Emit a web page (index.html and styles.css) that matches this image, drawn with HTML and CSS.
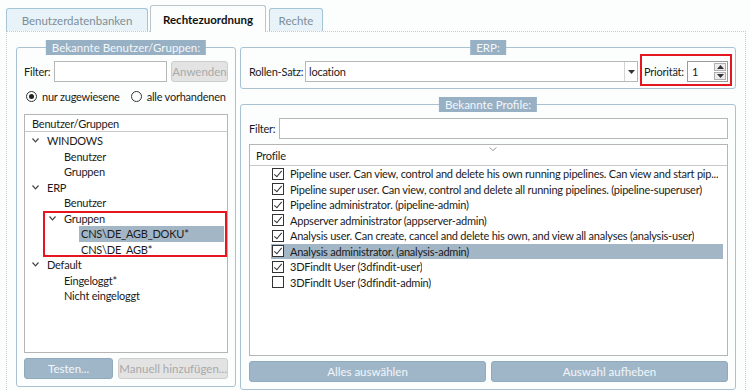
FILE: index.html
```html
<!DOCTYPE html>
<html lang="de">
  <head>
    <meta charset="UTF-8" />
    <title>Rechtezuordnung</title>
    <link rel="stylesheet" href="styles.css">
  </head>
  <body>
    <div class="window">
      <div class="tabs">
        <div class="tab tab-db">Benutzerdatenbanken</div>
        <div class="tab active">Rechtezuordnung</div>
        <div class="tab tab-rights">Rechte</div>
      </div>

      <div class="page">
        <!-- left: users / groups -->
        <div class="group users">
          <div class="group-title">Bekannte Benutzer/Gruppen:</div>
          <div class="field-row">
            <span class="field-label">Filter:</span>
            <div class="text-input"></div>
            <div class="btn off apply">Anwenden</div>
          </div>
          <div class="radios">
            <span class="radio checked"></span>
            <span>nur zugewiesene</span>
            <span class="radio second"></span>
            <span>alle vorhandenen</span>
          </div>
          <div class="tree">
            <div class="tree-head">Benutzer/Gruppen</div>
            <div class="tree-body">
              <div class="node lvl1"><span class="twist"><svg width="7" height="5"><polyline points="0.5,0.5 3.5,3.8 6.5,0.5" /></svg></span><span class="node-text">WINDOWS</span></div>
              <div class="node lvl2"><span class="twist"></span><span class="node-text">Benutzer</span></div>
              <div class="node lvl2"><span class="twist"></span><span class="node-text">Gruppen</span></div>
              <div class="node lvl1"><span class="twist"><svg width="7" height="5"><polyline points="0.5,0.5 3.5,3.8 6.5,0.5" /></svg></span><span class="node-text">ERP</span></div>
              <div class="node lvl2"><span class="twist"></span><span class="node-text">Benutzer</span></div>
              <div class="mark">
                <div class="node lvl2"><span class="twist"><svg width="7" height="5"><polyline points="0.5,0.5 3.5,3.8 6.5,0.5" /></svg></span><span class="node-text">Gruppen</span></div>
                <div class="node lvl3 sel"><span class="twist"></span><span class="node-text">CNS\DE_AGB_DOKU*</span></div>
                <div class="node lvl3"><span class="twist"></span><span class="node-text">CNS\DE_AGB*</span></div>
              </div>
              <div class="node lvl1"><span class="twist"><svg width="7" height="5"><polyline points="0.5,0.5 3.5,3.8 6.5,0.5" /></svg></span><span class="node-text">Default</span></div>
              <div class="node lvl2"><span class="twist"></span><span class="node-text">Eingeloggt*</span></div>
              <div class="node lvl2"><span class="twist"></span><span class="node-text">Nicht eingeloggt</span></div>
            </div>
          </div>
          <div class="btn-row">
            <div class="btn test-btn">Testen...</div>
            <div class="btn off add-btn">Manuell hinzufügen...</div>
          </div>
        </div>

        <!-- right: role set and profiles -->
        <div class="side">
          <div class="group erp">
            <div class="group-title">ERP:</div>
            <div class="field-row">
              <span class="field-label wide">Rollen-Satz:</span>
              <div class="combo">
                <span class="combo-value">location</span>
                <span class="combo-drop"><svg width="7" height="4"><polygon points="0,0 7,0 3.5,4" /></svg></span>
              </div>
              <div class="prio">
                <span>Priorität:</span>
                <div class="spin">
                  <span class="spin-value">1</span>
                  <span class="spin-btns">
                    <span class="spin-btn"><svg width="7" height="4"><polygon points="3.5,0 7,4 0,4" /></svg></span>
                    <span class="spin-btn"><svg width="7" height="4"><polygon points="0,0 7,0 3.5,4" /></svg></span>
                  </span>
                </div>
              </div>
            </div>
          </div>

          <div class="group profiles">
            <div class="group-title">Bekannte Profile:</div>
            <div class="field-row">
              <span class="field-label">Filter:</span>
              <div class="text-input"></div>
            </div>
            <div class="list">
              <div class="list-head">Profile<svg class="sort" width="8" height="4"><polyline points="0.5,0.5 4,3.5 7.5,0.5" /></svg></div>
              <div class="item"><span class="check on"></span><span class="item-text">Pipeline user. Can view, control and delete his own running pipelines. Can view and start pip...</span></div>
              <div class="item"><span class="check on"></span><span class="item-text">Pipeline super user. Can view, control and delete all running pipelines. (pipeline-superuser)</span></div>
              <div class="item"><span class="check on"></span><span class="item-text">Pipeline administrator. (pipeline-admin)</span></div>
              <div class="item"><span class="check on"></span><span class="item-text">Appserver administrator (appserver-admin)</span></div>
              <div class="item"><span class="check on"></span><span class="item-text">Analysis user. Can create, cancel and delete his own, and view all analyses (analysis-user)</span></div>
              <div class="item sel"><span class="check on"></span><span class="item-text">Analysis administrator. (analysis-admin)</span></div>
              <div class="item"><span class="check on"></span><span class="item-text">3DFindIt User (3dfindit-user)</span></div>
              <div class="item"><span class="check"></span><span class="item-text">3DFindIt User (3dfindit-admin)</span></div>
            </div>
            <div class="btn-row">
              <div class="btn half">Alles auswählen</div>
              <div class="btn half">Auswahl aufheben</div>
            </div>
          </div>
        </div>
      </div>
    </div>
  </body>
</html>
```

FILE: styles.css
```css
* {
  box-sizing: border-box;
}
body {
  margin: 0;
  background-color: #fcfefe;
  font-family: Lato, 'Noto Sans', sans-serif;
  font-size: 11px;
  letter-spacing: -0.22px;
  color: #1b1b1b;
  white-space: nowrap;
  overflow: hidden;
}
.window {
  padding: 5px 0 0 6px;
  height: 390px;
}

/* tabs */
.tabs {
  display: flex;
  align-items: flex-end;
  height: 26px;
}
.tab {
  height: 23px;
  display: flex;
  align-items: center;
  justify-content: center;
  border: 1px solid #a5c4d4;
  border-bottom: none;
  border-radius: 3px 3px 0 0;
  background-color: #e7f3f8;
  color: #7d8e99;
  font-size: 11.5px;
  letter-spacing: 0;
  margin-right: 2px;
}
.tab-db {
  width: 142px;
}
.tab-rights {
  width: 54px;
}
.tab.active {
  width: 116px;
  height: 27px;
  margin-bottom: -1px;
  margin-right: 3px;
  background-color: #fcfefe;
  border-color: #b9c4cb;
  color: #111;
  font-weight: bold;
  position: relative;
  z-index: 1;
}

.page {
  width: 740px;
  height: 359px;
  border: 1px dotted #c3cdd2;
  border-bottom: none;
  display: flex;
  gap: 4px;
  padding: 15px 9px 0;
}

/* group boxes */
.group {
  border: 1px solid #a9c1d1;
  border-radius: 3px;
  position: relative;
}
.group-title {
  position: absolute;
  top: -8px;
  left: 50%;
  transform: translateX(-50%);
  height: 15px;
  line-height: 15px;
  padding: 0 6px;
  background-color: #97b0c4;
  color: #f3f7fa;
  font-size: 11.5px;
  letter-spacing: 0;
}

.field-row {
  display: flex;
  align-items: center;
  height: 21px;
}
.field-label {
  width: 30px;
  flex: none;
}
.field-label.wide {
  width: 56px;
}
.text-input {
  flex: 1;
  height: 21px;
  border: 1px solid #b7b7b7;
  background-color: #fff;
}

.btn {
  height: 21px;
  border: 1px solid #8fa9bd;
  border-radius: 3px;
  background-color: #9fb6c9;
  color: #f2f6f9;
  display: flex;
  align-items: center;
  justify-content: center;
  font-size: 11.5px;
  letter-spacing: 0;
}
.btn.off {
  background-color: #e3e3e3;
  border-color: #cdcdcd;
  color: #a9a9a9;
}
.apply {
  width: 57px;
  margin-left: 4px;
}
.btn-row {
  display: flex;
  gap: 5px;
  margin-top: 5px;
}

/* left box */
.users {
  width: 220px;
  height: 340px;
  padding: 13px 7px 7px;
  display: flex;
  flex-direction: column;
}
.radios {
  display: flex;
  align-items: center;
  height: 16px;
  margin-top: 6px;
}
.radio {
  width: 11px;
  height: 11px;
  border: 1px solid #333;
  border-radius: 50%;
  margin: 0 5px 0 2px;
  display: flex;
  align-items: center;
  justify-content: center;
}
.radio.checked::after {
  content: "";
  width: 5px;
  height: 5px;
  border-radius: 50%;
  background-color: #222;
}
.radio.second {
  margin-left: 11px;
}
.tree {
  flex: 1;
  margin-top: 10px;
  border: 1px solid #b5b5b5;
  background-color: #fff;
}
.tree-head {
  height: 17px;
  border-bottom: 1px solid #c8c8c8;
  padding-left: 7px;
  display: flex;
  align-items: center;
}
.tree-body {
  padding-top: 1px;
}
.node {
  height: 15.5px;
  display: flex;
  align-items: center;
}
.twist {
  width: 15px;
  flex: none;
  display: flex;
}
.twist polyline {
  fill: none;
  stroke: #444;
  stroke-width: 1.2;
}
.lvl1 {
  padding-left: 7px;
}
.lvl2 {
  padding-left: 24px;
}
.lvl3 {
  padding-left: 41px;
}
.node-text {
  margin-left: -2px;
  padding: 0 2px;
}
.node.sel .node-text {
  flex: 1;
  align-self: stretch;
  display: flex;
  align-items: center;
  margin-right: 3px;
  background-color: #a3b6c6;
}
.mark {
  margin-left: 18px;
  position: relative;
}
.mark .lvl2 {
  padding-left: 6px;
}
.mark .lvl3 {
  padding-left: 23px;
}
.mark::after {
  content: "";
  position: absolute;
  inset: 0;
  border: 2px solid #e5161f;
}
.test-btn {
  width: 93px;
}
.add-btn {
  flex: 1;
}

/* right side */
.side {
  width: 496px;
  display: flex;
  flex-direction: column;
  gap: 15px;
}
.erp {
  height: 42px;
  padding: 13px 7px 6px 8px;
}
.combo {
  width: 333px;
  height: 21px;
  border: 1px solid #b7b7b7;
  background-color: #fff;
  display: flex;
  align-items: center;
}
.combo-value {
  flex: 1;
  padding-left: 3px;
}
.combo-drop {
  width: 13px;
  height: 100%;
  border-left: 1px solid #d4d4d4;
  display: flex;
  align-items: center;
  justify-content: center;
}
.combo-drop polygon,
.spin-btn polygon {
  fill: #333;
}
.prio {
  flex: 1;
  margin-left: 6px;
  display: flex;
  align-items: center;
  position: relative;
}
.prio::after {
  content: "";
  position: absolute;
  left: -4px;
  right: -4px;
  top: -7px;
  bottom: -4px;
  border: 2px solid #e5161f;
}
.spin {
  width: 41px;
  height: 21px;
  margin-left: auto;
  border: 1px solid #9a9a9a;
  background-color: #fff;
  display: flex;
}
.spin-value {
  flex: 1;
  padding-left: 4px;
  display: flex;
  align-items: center;
}
.spin-btns {
  width: 14px;
  display: flex;
  flex-direction: column;
  gap: 1px;
  padding: 1px;
}
.spin-btn {
  flex: 1;
  border: 1px solid #b0b0b0;
  background-color: #ececec;
  display: flex;
  align-items: center;
  justify-content: center;
}

.profiles {
  flex: 1;
  padding: 13px 7px 7px 8px;
  display: flex;
  flex-direction: column;
}
.list {
  flex: 1;
  margin-top: 5px;
  border: 1px solid #b5b5b5;
  background-color: #fff;
}
.list-head {
  height: 21px;
  border-bottom: 1px solid #c8c8c8;
  padding-left: 6px;
  display: flex;
  align-items: center;
  position: relative;
}
.sort {
  position: absolute;
  top: 2px;
  left: 50%;
}
.sort polyline {
  fill: none;
  stroke: #9a9a9a;
  stroke-width: 1;
}
.item {
  height: 15.5px;
  margin: 0 4px 0 21px;
  display: flex;
  align-items: center;
}
.item.sel {
  background-color: #a3b6c6;
}
.check {
  width: 12px;
  height: 12px;
  margin: 0 6px 0 1px;
  border: 1px solid #333;
  background-color: #fff;
  flex: none;
  position: relative;
}
.check.on::after {
  content: "";
  position: absolute;
  left: 3px;
  top: 0;
  width: 3px;
  height: 7px;
  border: solid #333;
  border-width: 0 1.3px 1.3px 0;
  transform: rotate(40deg);
}
.item-text {
  overflow: hidden;
}
.half {
  flex: 1;
}
```
